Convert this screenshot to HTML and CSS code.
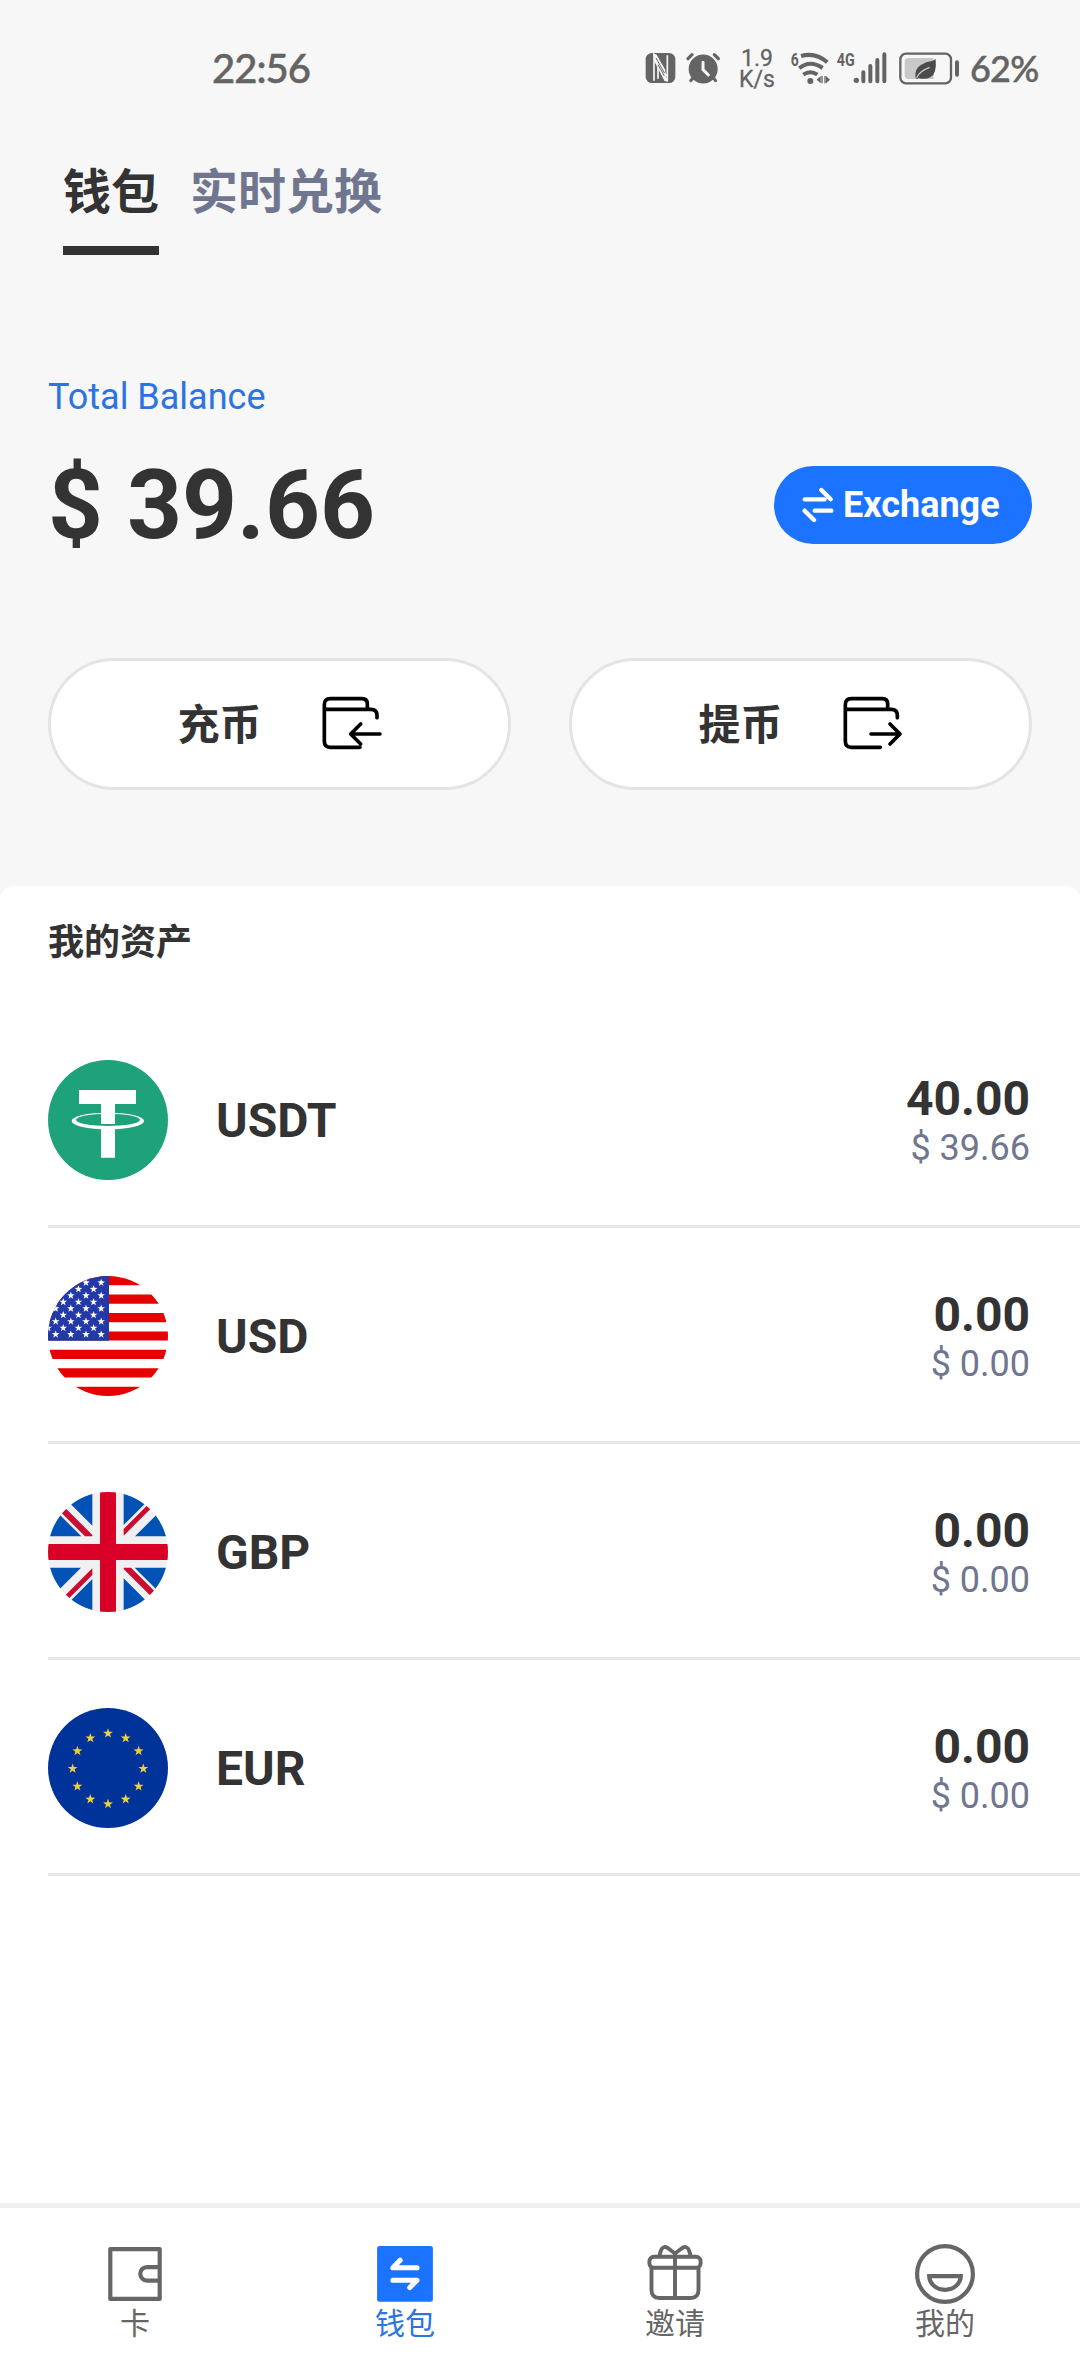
FILE: index.html
```html
<!DOCTYPE html>
<html lang="zh-CN">
<head>
<meta charset="utf-8">
<title>钱包</title>
<link rel="stylesheet" href="styles.css">
</head>
<body>
<svg class="defs" width="0" height="0" aria-hidden="true">
  <defs>
    <symbol id="star" viewBox="-10 -10 20 20" overflow="visible">
      <path d="M0-10 2.35-3.24 9.51-3.09 3.8 1.24 5.88 8.09 0 4-5.88 8.09-3.8 1.24-9.51-3.09-2.35-3.24Z"/>
    </symbol>
    <clipPath id="round"><circle cx="180" cy="180" r="180"/></clipPath>
  </defs>
</svg>
<div class="screen">
  <header class="status">
    <span class="clock">22:56</span>
    <div class="indicators">
      <svg class="nfc" width="31" height="40" viewBox="45 54 93 120">
        <rect x="47" y="69" width="89" height="90" rx="19" fill="#646464"/>
        <path d="M72 152V74L109 138M84 98V84M74 84L112 154V76M84 110V146" fill="none" stroke="#f7f7f7" stroke-width="5"/>
        <path d="M70 73h9l27 47v14l6 20h-8L74 96Z" fill="#f7f7f7"/>
        <path d="M78 84L104 130M84 104L103 138" fill="none" stroke="#646464" stroke-width="3"/>
      </svg>
      <svg class="alarm" width="34" height="40" viewBox="168 54 102 120">
        <circle cx="219.500" cy="117" r="43.500" fill="#646464"/>
        <path d="M174 86L186 74M253 74L265 86" stroke="#646464" stroke-width="10" stroke-linecap="round"/>
        <path d="M188 145L182 152M251 145L257 152" stroke="#646464" stroke-width="9" stroke-linecap="round"/>
        <path d="M219 97V119L235 135" fill="none" stroke="#f7f7f7" stroke-width="9" stroke-linecap="round"/>
      </svg>
      <span class="speed"><span>1.9</span><span>K/s</span></span>
      <svg class="wifi" width="41" height="40" viewBox="480 54 123 120">
        <g fill="none" stroke="#646464" stroke-width="12">
          <path d="M513 78Q557 66 592 97"/>
          <path d="M508 115Q540 88 578 114"/>
          <path d="M520 134Q541 120 562 134"/>
        </g>
        <circle cx="541" cy="153" r="9" fill="#646464"/>
        <path d="M560 149L572 138V160ZM574 138H578V160H574ZM583 138H587V160H583ZM588 138L600 149 588 160Z" fill="#646464"/>
        <text x="482" y="107" class="tiny" textLength="24" lengthAdjust="spacingAndGlyphs">6</text>
      </svg>
      <svg class="signal" width="52" height="40" viewBox="620 54 156 120">
        <text x="622" y="109" class="tiny" textLength="54" lengthAdjust="spacingAndGlyphs">4G</text>
        <circle cx="681" cy="151" r="8" fill="#646464"/>
        <path d="M702 127V154M723 108V154M744 90V154M765 73V154" stroke="#646464" stroke-width="12" stroke-linecap="round"/>
      </svg>
      <svg class="battery" width="62" height="40" viewBox="805 54 186 120">
        <rect x="812" y="71" width="152" height="89" rx="17" fill="none" stroke="#646464" stroke-width="7"/>
        <path d="M837 84H912V147H837Q825 147 825 135V96Q825 84 837 84Z" fill="#c9c9c9"/>
        <rect x="976" y="91" width="12" height="49" rx="6" fill="#646464"/>
        <path d="M918 87Q922 132 902 142Q886 150 866 144L862 148L857 142Q855 115 875 104Q890 95 904 94Q912 92 918 87Z" fill="#4b4b4b"/>
        <path d="M861 143Q868 124 900 112" fill="none" stroke="#c9c9c9" stroke-width="4"/>
      </svg>
      <span class="percent">62%</span>
    </div>
  </header>

  <nav class="tabs">
    <a class="tab tab-active">钱包</a>
    <a class="tab">实时兑换</a>
  </nav>

  <section class="balance">
    <div class="balance-label">Total Balance</div>
    <div class="balance-row">
      <div class="balance-value">$ 39.66</div>
      <button class="exchange">
        <svg width="32" height="36" viewBox="0 0 96 108" fill="none" stroke="#fff" stroke-width="13" stroke-linecap="round" stroke-linejoin="round">
          <path d="M8 37H68M58 9L86 37M88 71H38M8 71L36 99"/>
        </svg>
        <span>Exchange</span>
      </button>
    </div>
  </section>

  <section class="actions">
    <button class="action">
      <span>充币</span>
      <svg width="62" height="56" viewBox="0 0 186 168" fill="none" stroke="#000" stroke-width="11" stroke-linecap="round" stroke-linejoin="round">
        <path d="M142 40V27Q142 11 126 11H31Q13 11 13 29V139Q13 157 31 157H120M13 43H153Q171 43 171 61V68M180 117H92M122 87L92 117L122 147"/>
      </svg>
    </button>
    <button class="action">
      <span>提币</span>
      <svg width="62" height="56" viewBox="0 0 186 168" fill="none" stroke="#000" stroke-width="11" stroke-linecap="round" stroke-linejoin="round">
        <path d="M140 40V27Q140 11 124 11H31Q13 11 13 29V139Q13 157 31 157H118M13 43H151Q169 43 169 61V68M90 117H177M147 87L177 117L147 147"/>
      </svg>
    </button>
  </section>

  <main class="assets">
    <h2 class="assets-title">我的资产</h2>
    <div class="asset">
      <svg class="coin" viewBox="0 0 360 360">
        <circle cx="180" cy="180" r="180" fill="#1ea27a"/>
        <path fill="#fff" fill-rule="evenodd" d="M71 183a108.500 25 0 1 0 217 0a108.500 25 0 1 0-217 0ZM84 179.500a96 18.500 0 1 0 192 0a96 18.500 0 1 0-192 0Z"/>
        <path fill="#fff" d="M93 90H264V132H201V192H159V132H93ZM159 200H201V293H159Z"/>
      </svg>
      <span class="code">USDT</span>
      <div class="amounts"><span class="amount">40.00</span><span class="fiat">$ 39.66</span></div>
    </div>
    <div class="asset">
      <svg class="coin" viewBox="0 0 360 360">
        <g clip-path="url(#round)">
          <path fill="#fff" d="M0 0H360V360H0Z"/>
          <path stroke="#e60000" stroke-width="27.700" d="M0 13.800H360M0 69.200H360M0 124.600H360M0 180H360M0 235.400H360M0 290.800H360M0 346.200H360"/>
          <path fill="#2439a8" d="M0 0H183V194H0Z"/>
          <g id="usd-stars" fill="#fff"></g>
        </g>
      </svg>
      <span class="code">USD</span>
      <div class="amounts"><span class="amount">0.00</span><span class="fiat">$ 0.00</span></div>
    </div>
    <div class="asset">
      <svg class="coin" viewBox="0 0 360 360">
        <g clip-path="url(#round)">
          <path fill="#f0f0f0" d="M0 0H360V360H0Z"/>
          <g id="gb-half">
            <path fill="#0052b4" d="M32 0H133V101ZM0 33V133H100ZM227 0H326L227 99ZM360 34V133H261Z"/>
            <path fill="#cc0a2f" d="M41 63L54 50 133 129V133H111ZM227 111V131L308 50 298 40Z"/>
          </g>
          <use href="#gb-half" transform="rotate(180 180 180)"/>
          <path fill="#d80027" d="M156 0H204V156H360V204H204V360H156V204H0V156H156Z"/>
        </g>
      </svg>
      <span class="code">GBP</span>
      <div class="amounts"><span class="amount">0.00</span><span class="fiat">$ 0.00</span></div>
    </div>
    <div class="asset">
      <svg class="coin" viewBox="0 0 360 360">
        <circle cx="180" cy="180" r="180" fill="#003399"/>
        <g id="eur-stars" fill="#f0d03c"></g>
      </svg>
      <span class="code">EUR</span>
      <div class="amounts"><span class="amount">0.00</span><span class="fiat">$ 0.00</span></div>
    </div>
  </main>

  <nav class="bottom">
    <a class="item">
      <svg viewBox="0 0 62 59" fill="none" stroke="#666" stroke-width="4.200" stroke-linejoin="round">
        <rect x="6.300" y="3.100" width="49.400" height="49.800"/>
        <path d="M55.700 21.100H43a6.750 6.750 0 0 0 0 13.500H55.700"/>
      </svg>
      <span>卡</span>
    </a>
    <a class="item item-active">
      <svg viewBox="0 0 62 59">
        <rect x="3.100" y="0" width="55.800" height="55.700" rx="2.500" fill="#1b73ff"/>
        <path d="M43 21.700H18.900L26.100 14.300M18.900 34.300H43L35.800 41.500" fill="none" stroke="#fff" stroke-width="5.100" stroke-linecap="round" stroke-linejoin="round"/>
      </svg>
      <span>钱包</span>
    </a>
    <a class="item">
      <svg viewBox="0 0 62 59" fill="none" stroke="#666" stroke-width="3.900" stroke-linejoin="round">
        <rect x="5.400" y="10.700" width="51.200" height="11.100" rx="4.500"/>
        <path d="M7.500 21.800V44Q7.500 52 15.500 52H46.500Q54.500 52 54.500 44V21.800M31 7.500V52"/>
        <path d="M15.300 10L16.900 4.600C18 1 21 .2 23.800 2L31 7.500L38.200 2C41 .2 44 1 45.100 4.600L46.700 10"/>
      </svg>
      <span>邀请</span>
    </a>
    <a class="item">
      <svg viewBox="0 0 62 59" fill="none" stroke="#666" stroke-width="4.200">
        <circle cx="31" cy="28" r="27.900"/>
        <path d="M15.200 30.100H46.800A15.800 13.700 0 0 1 15.200 30.100Z"/>
      </svg>
      <span>我的</span>
    </a>
  </nav>
</div>
<script src="stars.js"></script>
</body>
</html>
```
FILE: styles.css
```css
* { box-sizing: border-box; }
body {
  margin: 0;
  background: #f7f7f7;
  color: #333;
  font-family: Roboto, "Noto Sans CJK SC", sans-serif;
}
button { font: inherit; color: inherit; padding: 0; border: 0; }
svg { display: block; flex: none; overflow: visible; }
.defs { position: absolute; }
.screen {
  width: 1080px;
  height: 2376px;
  display: flex;
  flex-direction: column;
  overflow: hidden;
}

.status {
  height: 136px;
  padding: 0 42px 0 212px;
  display: flex;
  align-items: center;
  justify-content: space-between;
  color: #646464;
  font-family: Lato, Roboto, sans-serif;
  font-weight: 500;
}
.clock { font-size: 40px; line-height: 48px; letter-spacing: -1px; -webkit-text-stroke: 0.5px #646464; }
.indicators { display: flex; align-items: center; }
.alarm { margin-left: 10px; }
.speed {
  width: 40px;
  margin: 1px 13px 0 17px;
  display: flex;
  flex-direction: column;
  align-items: center;
  font: 400 23px/21px Roboto, sans-serif;
  -webkit-text-stroke: 0.3px #646464;
}
.signal { margin-left: 5px; }
.battery { margin-left: 10px; }
.percent {
  width: 68px;
  margin-left: 10px;
  font-size: 36px;
  line-height: 44px;
  letter-spacing: -0.8px;
  white-space: nowrap;
  -webkit-text-stroke: 0.5px #646464;
}
.tiny { font: 700 54px Roboto, sans-serif; fill: #646464; }

.tabs {
  height: 119px;
  padding-left: 63px;
  display: flex;
  gap: 31px;
}
.tab {
  height: 119px;
  padding-top: 22px;
  font-size: 48px;
  line-height: 70px;
  font-weight: 700;
  color: #70768f;
}
.tab-active { color: #333; border-bottom: 9px solid #333; }

.balance { padding: 121px 48px 0; }
.balance-label { font-size: 36px; line-height: 42px; color: #2b74e2; }
.balance-row {
  height: 112px;
  margin-top: 31px;
  display: flex;
  align-items: center;
  justify-content: space-between;
}
.balance-value { font-size: 96px; line-height: 112px; font-weight: 700; }
.exchange {
  width: 258px;
  height: 78px;
  border-radius: 39px;
  background: #1b73ff;
  color: #fff;
  display: flex;
  align-items: center;
  padding-left: 28px;
  gap: 9px;
  font-size: 36px;
  font-weight: 700;
}

.actions {
  padding: 97px 48px 96px;
  display: grid;
  grid-template-columns: 1fr 1fr;
  gap: 58px;
}
.action {
  height: 132px;
  padding-bottom: 2px;
  border: 3px solid #e4e4e4;
  border-radius: 66px;
  background: #fff;
  display: flex;
  align-items: center;
  justify-content: center;
  gap: 58px;
  font-size: 42px;
  font-weight: 700;
}
.action span { padding-bottom: 3px; }

.assets {
  flex: 1;
  background: #fff;
  border-radius: 14px 14px 0 0;
  padding-left: 48px;
}
.assets-title { margin: 0; padding-top: 31px; height: 126px; font-size: 36px; line-height: 52px; font-weight: 700; }
.asset {
  height: 216px;
  padding: 3px 50px 0 0;
  border-bottom: 3px solid #e8e8e8;
  display: flex;
  align-items: center;
}
.coin { width: 120px; height: 120px; }
.code { margin-left: 48px; font-size: 48px; font-weight: 700; }
.amounts { margin-left: auto; padding-top: 1px; display: flex; flex-direction: column; align-items: flex-end; gap: 1px; }
.amount { font-size: 48px; line-height: 54px; font-weight: 700; }
.fiat { font-size: 36px; line-height: 42px; color: #70768f; }

.bottom {
  height: 173px;
  border-top: 5px solid #efefef;
  background: #fff;
  display: grid;
  grid-template-columns: repeat(4, 1fr);
}
.item {
  padding-top: 38px;
  display: flex;
  flex-direction: column;
  align-items: center;
  font-size: 30px;
  line-height: 38px;
  color: #666;
}
.item svg { width: 62px; height: 59px; }
.item-active { color: #2b74e2; }
```
FILE: stars.js
```js
const SVG_NS = "http://www.w3.org/2000/svg";

function addStar(group, x, y, radius) {
  const star = document.createElementNS(SVG_NS, "use");
  star.setAttribute("href", "#star");
  star.setAttribute("x", x - radius);
  star.setAttribute("y", y - radius);
  star.setAttribute("width", radius * 2);
  star.setAttribute("height", radius * 2);
  group.appendChild(star);
}

const canton = document.getElementById("usd-stars");
for (let row = 0; row < 9; row++) {
  for (let col = 0; col < 4; col++) {
    addStar(canton, 23 + col * 45.5 - (row % 2) * 22.7, 20 + row * 19.4, 12);
  }
}

const ring = document.getElementById("eur-stars");
for (let i = 0; i < 12; i++) {
  const angle = (i * Math.PI) / 6;
  addStar(ring, 180 + 106 * Math.sin(angle), 182 - 106 * Math.cos(angle), 15.5);
}
```
